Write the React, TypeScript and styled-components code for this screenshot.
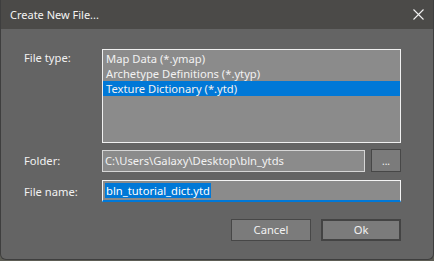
import styled, { createGlobalStyle } from 'styled-components';

const Global = createGlobalStyle`
    html, body {
        margin: 0;
        padding: 0;
        background: #5d5d55;
    }
    * {
        box-sizing: border-box;
    }
`;

const WindowStl = styled.div`
    width: 434px;
    height: 260px;
    display: flex;
    flex-direction: column;
    background: #646464;
    border: 1px solid #3e3e3e;
    border-top: none;
    border-radius: 0 0 6px 6px;
    overflow: hidden;
    font-family: "Segoe UI", "Noto Sans", sans-serif;
    font-size: 11.2px;
    color: #f2f2f2;
`;

const TitleBar = styled.div`
    height: 29px;
    margin: 0 -1px;
    padding: 0 10px 0 10px;
    display: flex;
    align-items: center;
    justify-content: space-between;
    background: #4b4a48;
    color: #f4f4f4;
    span {
        padding-bottom: 1px;
        font-size: 11px;
    }
`;

const Body = styled.div`
    flex: 1;
    padding: 20px 32px 0 23px;
    display: flex;
    flex-direction: column;
`;

const Row = styled.div<{ $gap: number; $top?: boolean }>`
    display: flex;
    align-items: ${p => (p.$top ? 'flex-start' : 'center')};
    margin-bottom: ${p => p.$gap}px;
`;

const Label = styled.div<{ $pad?: number }>`
    width: 78px;
    flex-shrink: 0;
    padding-top: ${p => p.$pad ?? 0}px;
`;

const ListBox = styled.div`
    flex: 1;
    height: 94px;
    background: #8b8b8b;
    border: 1px solid #f0f0f0;
    padding-top: 1px;
    display: flex;
    flex-direction: column;
`;

const ListItem = styled.div<{ $selected?: boolean }>`
    height: 15px;
    line-height: 15px;
    padding-left: 3px;
    background: ${p => (p.$selected ? '#0078d7' : 'transparent')};
    white-space: nowrap;
`;

const Field = styled.div<{ $focused?: boolean }>`
    flex: 1;
    height: 22px;
    background: #8b8b8b;
    border: 1px solid ${p => (p.$focused ? '#f4f4f4' : '#d6d6d6')};
    border-bottom: ${p => (p.$focused ? '2px solid #0078d7' : '1px solid #d6d6d6')};
    padding: 0 2px;
    display: flex;
    align-items: center;
    white-space: nowrap;
    overflow: hidden;
`;

const Selection = styled.span`
    background: #0078d7;
    color: #ffffff;
    line-height: 15px;
    padding: 0 1px;
`;

const BrowseButton = styled.div`
    width: 30px;
    height: 23px;
    margin-left: 6px;
    background: #7b7b7b;
    border: 1px solid #474747;
    display: flex;
    align-items: flex-end;
    justify-content: center;
    padding-bottom: 4px;
    font-size: 10px;
    line-height: 11px;
`;

const Buttons = styled.div`
    display: flex;
    justify-content: flex-end;
    gap: 10px;
`;

const Button = styled.div<{ $default?: boolean }>`
    width: 80px;
    height: 22px;
    display: flex;
    align-items: center;
    justify-content: center;
    background: #7b7b7b;
    border: ${p => (p.$default ? '2px solid #434343' : '1px solid #474747')};
    padding-bottom: 1px;
`;

const CloseIcon = () => (
    <svg width="11" height="11" viewBox="0 0 11 11">
        <path d="M0.5 0.5L10.5 10.5M10.5 0.5L0.5 10.5" stroke="#f0f0f0" strokeWidth="1.1" />
    </svg>
);

export default function App() {
    return (
        <>
            <Global />
            <WindowStl>
                <TitleBar>
                    <span>Create New File...</span>
                    <CloseIcon />
                </TitleBar>
                <Body>
                    <Row $gap={6} $top>
                        <Label $pad={1}>File type:</Label>
                        <ListBox>
                            <ListItem>Map Data (*.ymap)</ListItem>
                            <ListItem>Archetype Definitions (*.ytyp)</ListItem>
                            <ListItem $selected>Texture Dictionary (*.ytd)</ListItem>
                        </ListBox>
                    </Row>
                    <Row $gap={8}>
                        <Label>Folder:</Label>
                        <Field>C:\Users\Galaxy\Desktop\bln_ytds</Field>
                        <BrowseButton>...</BrowseButton>
                    </Row>
                    <Row $gap={17}>
                        <Label>File name:</Label>
                        <Field $focused>
                            <Selection>bln_tutorial_dict.ytd</Selection>
                        </Field>
                    </Row>
                    <Buttons>
                        <Button>Cancel</Button>
                        <Button $default>Ok</Button>
                    </Buttons>
                </Body>
            </WindowStl>
        </>
    );
}
